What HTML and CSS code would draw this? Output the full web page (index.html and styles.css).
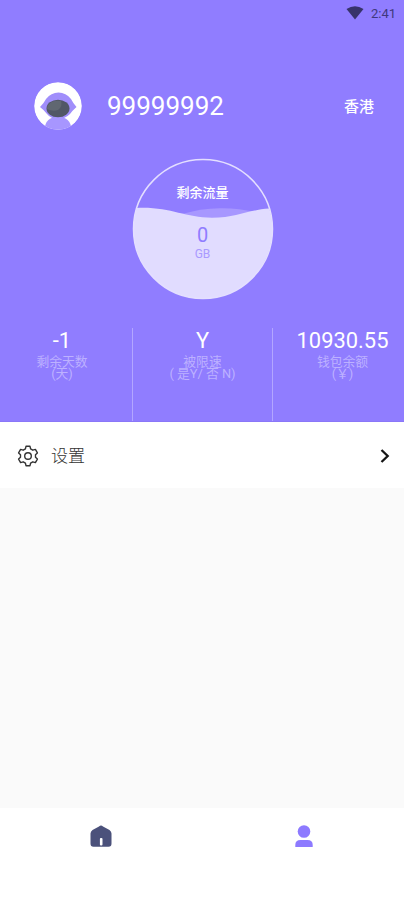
FILE: index.html
```html
<!DOCTYPE html>
<html lang="zh-CN">
<head>
<meta charset="utf-8">
<meta name="viewport" content="width=device-width, initial-scale=1">
<title>我的</title>
<link rel="stylesheet" href="styles.css">
</head>
<body>
<main class="screen">
  <header class="hero">
    <div class="status">
      <svg width="18" height="14" viewBox="0 0 18 14"><path d="M.5 3Q9-2.4 17.500 3L9 13.500Z" fill="#37336a"/></svg>
      <span>2:41</span>
    </div>
    <div class="profile">
      <svg class="avatar" width="48" height="48" viewBox="0 0 48 48">
        <defs><clipPath id="face"><circle cx="24" cy="24" r="23.800"/></clipPath></defs>
        <g clip-path="url(#face)">
          <circle cx="24" cy="24" r="24" fill="#fff"/>
          <path d="M6 25Q10 21 12 17Q17 10.500 24.500 10.500Q32 10.500 37 17Q39 21 42.500 25Q38 29 36 32Q31 37 24 37Q17 37 13 32Q10 28 6 25Z" fill="#a08efb"/>
          <path d="M10.500 49Q10.500 35 24 35Q37.500 35 37.500 49Z" fill="#a796ff"/>
          <ellipse cx="24" cy="26.500" rx="11.500" ry="8.800" fill="#515765"/>
          <path d="M15 22Q19 17.500 27 19Q29 24 24 28Q19 30 13 27Q13 24 15 22Z" fill="#606771"/>
        </g>
      </svg>
      <span class="name">99999992</span>
      <span class="region">香港</span>
    </div>
    <div class="gauge">
      <svg class="wave" width="142" height="142" viewBox="0 0 142 142">
        <path d="M50 56Q68 50.500 88 50.200Q108 50 122 54L105 61H70Z" fill="#a797ff"/>
        <path d="M4.700 50C38 48.500 52 59.700 80 59.700C105 59.700 115 52 137.300 50.500A69.500 69.500 0 1 1 4.700 50Z" fill="#e1dcff"/>
        <circle cx="71" cy="71" r="69.500" fill="none" stroke="#e4dfff" stroke-width="1.500"/>
      </svg>
      <span class="gauge-title">剩余流量</span>
      <span class="gauge-value">0</span>
      <span class="gauge-unit">GB</span>
    </div>
    <div class="stats">
      <div class="stat"><b>-1</b><span>剩余天数</span><span>(天)</span></div>
      <div class="stat"><b>Y</b><span>被限速</span><span>( 是Y/ 否 N)</span></div>
      <div class="stat"><b>10930.55</b><span>钱包余额</span><span>(￥)</span></div>
    </div>
  </header>
  <div class="row">
    <svg width="22" height="22" viewBox="0 0 22 22" fill="none" stroke="#333" stroke-width="1.400" stroke-linejoin="round">
      <path d="M9 1.300H13L13.600 3.900L15.800 5.200L18.400 4.400L20.400 7.900L18.500 9.700V12.300L20.400 14.100L18.400 17.600L15.800 16.800L13.600 18.100L13 20.700H9L8.400 18.100L6.200 16.800L3.600 17.600L1.600 14.100L3.500 12.300V9.700L1.600 7.900L3.600 4.400L6.200 5.200L8.400 3.900Z"/>
      <circle cx="11" cy="11" r="3.300"/>
    </svg>
    <span class="row-label">设置</span>
    <svg class="chevron" width="10" height="16" viewBox="0 0 10 16" fill="none" stroke="#151515" stroke-width="2.300"><path d="M1.500 2L7.700 8L1.500 14"/></svg>
  </div>
  <nav class="tabs">
    <svg width="24" height="26" viewBox="0 0 24 26"><path d="M12 1.500Q13 1.500 14 2.500L20.500 6Q22.500 7.500 22.500 9.500V19.500Q22.500 22.800 19.500 22.800H4.500Q1.500 22.800 1.500 19.500V9.500Q1.500 7.500 3.500 6L10 2.500Q11 1.500 12 1.500Z" fill="#4b517b"/><rect x="10.900" y="14" width="2.600" height="7.500" rx="1" fill="#fff"/></svg>
    <svg class="me" width="24" height="26" viewBox="0 0 24 26" fill="#8d7aff"><circle cx="12" cy="7.500" r="6.300"/><path d="M3.300 23V21Q3.300 16 8.500 16H15.500Q20.700 16 20.700 21V23Z"/></svg>
  </nav>
</main>
</body>
</html>
```
FILE: styles.css
```css
* { box-sizing: border-box; }
body {
  margin: 0;
  font-family: Roboto, "Noto Sans CJK SC", sans-serif;
  background: #fafafa;
}
svg { display: block; flex: none; }
.screen { height: 900px; display: flex; flex-direction: column; }
.hero {
  height: 422px;
  background: #907dff;
  border-bottom: 1px solid #8a77f8;
  color: #fff;
  display: flex;
  flex-direction: column;
}
.status {
  height: 26px;
  padding-right: 8px;
  display: flex;
  align-items: center;
  justify-content: flex-end;
  gap: 7px;
  font-size: 13px;
  color: #40387c;
}
.profile {
  height: 48px;
  margin-top: 56px;
  padding: 0 30px 0 33.5px;
  display: flex;
  align-items: center;
}
.name { margin-left: 25.500px; font-size: 26px; line-height: 46px; padding-bottom: 1px; }
.region { margin-left: auto; padding-bottom: 2px; font-size: 15px; font-weight: 500; }
.gauge {
  width: 142px;
  height: 142px;
  margin: 27.500px auto 0;
  position: relative;
  left: .5px;
  display: flex;
  flex-direction: column;
  align-items: center;
  text-align: center;
}
.wave { position: absolute; inset: 0; }
.gauge-title, .gauge-value, .gauge-unit { position: relative; }
.gauge-title { margin-top: 25px; font-size: 13px; line-height: 20px; font-weight: 500; }
.gauge-value { margin-top: 20.500px; font-size: 20px; line-height: 24px; color: #907dff; }
.gauge-unit { font-size: 12px; line-height: 15px; color: #a99aff; }
.stats {
  height: 93px;
  margin-top: 28.500px;
  display: grid;
  grid-template-columns: 133px 140px 131px;
}
.stat {
  display: flex;
  flex-direction: column;
  align-items: center;
  white-space: nowrap;
  font-size: 12.800px;
  line-height: 12.500px;
  color: #bdb1ff;
}
.stat:first-child { padding-right: 8px; }
.stat:last-child { padding-left: 8px; }
.stat:not(:last-child) { border-right: 1px solid #b3a6ff; }
.stat b { font-size: 21.900px; line-height: 26px; font-weight: 400; color: #fff; margin-bottom: 1.500px; }
.row {
  height: 66px;
  padding: 1px 14px 0 17px;
  display: flex;
  align-items: center;
  gap: 12px;
  background: #fff;
  font-size: 17px;
  font-weight: 300;
  color: #333;
}
.row-label { padding-bottom: 2px; }
.chevron { margin-left: auto; }
.tabs {
  height: 92px;
  margin-top: auto;
  padding-top: 16px;
  background: #fff;
  display: grid;
  grid-template-columns: 1fr 1fr;
  justify-items: center;
}
.me { margin-left: 2px; }
```
